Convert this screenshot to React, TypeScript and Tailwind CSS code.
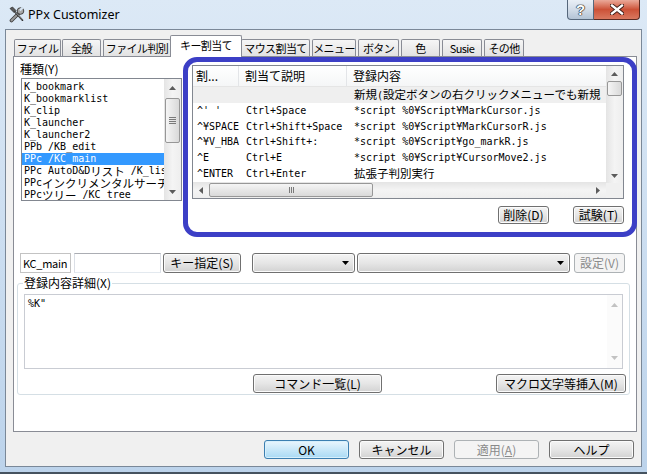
import React from 'react';

const mono = "font-['DejaVu_Sans_Mono','Noto_Sans_CJK_JP',monospace] text-[10px]";

// half-width text in the mono face, wide (CJK) runs a little larger like MS Gothic
function Mono({ text }: { text: string }) {
  const parts = text.split(/([^\x00-\x7f\u00a5]+)/);
  return (
    <>
      {parts.map((p, i) =>
        /[^\x00-\x7f\u00a5]/.test(p) ? (
          <span key={i} className="font-['Noto_Sans_CJK_JP',sans-serif] text-[11.5px]">
            {p}
          </span>
        ) : (
          <React.Fragment key={i}>{p}</React.Fragment>
        )
      )}
    </>
  );
}

function Arrow({ dir, light }: { dir: 'up' | 'down' | 'left' | 'right'; light?: boolean }) {
  const fill = light ? '#c2c2c2' : '#5c5c5c';
  if (dir === 'up' || dir === 'down') {
    return (
      <svg width="7" height="4" viewBox="0 0 7 4">
        <polygon points={dir === 'up' ? '0,4 3.5,0 7,4' : '0,0 7,0 3.5,4'} fill={fill} />
      </svg>
    );
  }
  return (
    <svg width="4" height="7" viewBox="0 0 4 7">
      <polygon points={dir === 'left' ? '4,0 4,7 0,3.5' : '0,0 0,7 4,3.5'} fill={fill} />
    </svg>
  );
}

function Btn({
  className,
  children,
  disabled,
  primary,
}: {
  className: string;
  children: React.ReactNode;
  disabled?: boolean;
  primary?: boolean;
}) {
  const look = disabled
    ? 'border-[#adb2b5] bg-[#f4f4f4] text-[#8a8a8a]'
    : primary
    ? 'border-[#3c7fb1] bg-linear-to-b from-[#eaf6fd] via-[#c9e8f9] to-[#a9daf5] shadow-[inset_0_0_0_1px_#d8f0fc]'
    : 'border-[#707070] bg-linear-to-b from-[#f4f4f4] via-[#e6e6e6] to-[#d2d2d2] shadow-[inset_0_0_0_1px_#fbfbfb]';
  return (
    <div
      className={`flex shrink-0 items-center justify-center whitespace-nowrap rounded-[3px] border text-[12px] leading-none ${look} ${className}`}
    >
      {children}
    </div>
  );
}

function Combo({ className }: { className: string }) {
  return (
    <div
      className={`flex h-[20px] shrink-0 items-center justify-end rounded-[3px] border border-[#707070] bg-linear-to-b from-[#f4f4f4] via-[#e6e6e6] to-[#d2d2d2] pr-[5px] shadow-[inset_0_0_0_1px_#fbfbfb] ${className}`}
    >
      <svg width="7" height="4" viewBox="0 0 7 4">
        <polygon points="0,0 7,0 3.5,4" fill="#000" />
      </svg>
    </div>
  );
}

function AppIcon() {
  return (
    <svg width="17" height="17" viewBox="0 0 17 17">
      <path d="M3.5 14.5 L11 7" stroke="#3a3a3a" strokeWidth="3.6" strokeLinecap="round" />
      <path d="M3.5 14.5 L11 7" stroke="#9a9a9a" strokeWidth="2" strokeLinecap="round" />
      <circle cx="12.5" cy="5" r="3.3" fill="#a8a8a8" stroke="#3a3a3a" strokeWidth="0.9" />
      <rect x="12.2" y="1" width="2.2" height="4" fill="#d6e4f2" transform="rotate(45 13.3 3)" />
      <path d="M2 2.5 L4.5 1 L8 4.5 L6 6.5 Z" fill="#5a5a5a" stroke="#2a2a2a" strokeWidth="0.7" />
      <path d="M6.8 5.6 L14.5 14.2" stroke="#2e2e2e" strokeWidth="1.7" strokeLinecap="round" />
      <path d="M7 5.6 L14.3 13.8" stroke="#b8b8b8" strokeWidth="0.6" />
    </svg>
  );
}

const listItems = [
  'K_bookmark',
  'K_bookmarklist',
  'K_clip',
  'K_launcher',
  'K_launcher2',
  'PPb /KB_edit',
  'PPc /KC_main',
  'PPc AutoD&Dリスト /K_list',
  'PPcインクリメンタルサーチ /K_isearch',
  'PPcツリー /KC_tree',
];

const rows: [string, string, string][] = [
  ['', '', '新規(設定ボタンの右クリックメニューでも新規'],
  ["^' '", 'Ctrl+Space', '*script %0¥Script¥MarkCursor.js'],
  ['^¥SPACE', 'Ctrl+Shift+Space', '*script %0¥Script¥MarkCursorR.js'],
  ['^¥V_HBA', 'Ctrl+Shift+:', '*script %0¥Script¥go_markR.js'],
  ['^E', 'Ctrl+E', '*script %0¥Script¥CursorMove2.js'],
  ['^ENTER', 'Ctrl+Enter', '拡張子判別実行'],
];

const tabs = [
  { label: 'ファイル', cls: 'w-[47px]' },
  { label: '全般', cls: 'ml-[1px] w-[39px]' },
  { label: 'ファイル判別', cls: 'ml-[2px] w-[68px]' },
  { label: 'キー割当て', cls: 'ml-[-1px] w-[72px]', active: true },
  { label: 'マウス割当て', cls: 'ml-[-1px] w-[69px]' },
  { label: 'メニュー', cls: 'ml-[2px] w-[44px]' },
  { label: 'ボタン', cls: 'ml-[2px] w-[41px]' },
  { label: '色', cls: 'ml-[2px] w-[39px]' },
  { label: 'Susie', cls: 'ml-[2px] w-[40px]' },
  { label: 'その他', cls: 'ml-[2px] w-[40px]' },
];

export default function App() {
  return (
    <div className="relative h-[474px] w-[647px] overflow-hidden border-b-2 border-[#45525f] bg-linear-to-b from-[#dce9f6] to-[#bcd3eb] font-['Noto_Sans_CJK_JP',sans-serif] text-[12px] text-black">
      {/* Title bar */}
      <div className="flex h-[29px] items-start">
        <div className="ml-[8px] mt-[6px]">
          <AppIcon />
        </div>
        <div className="ml-[3px] mt-[6px] font-['Noto_Sans',sans-serif] text-[12.5px] leading-[17px]">PPx Customizer</div>
        <div className="ml-auto mr-[7px] flex">
          <div className="flex h-[20px] w-[27px] items-center justify-center rounded-bl-[4px] border border-t-0 border-[#56677b] bg-linear-to-b from-[#e9eff6] via-[#d2dce8] to-[#b3c3d5] pb-[1px] font-['Liberation_Sans',sans-serif] text-[15px] font-bold leading-none text-white [text-shadow:0_0_1px_#222,0_0_1px_#222,0_0_1px_#222,0_0_1px_#222]">
            ?
          </div>
          <div className="flex h-[20px] w-[46px] items-center justify-center rounded-br-[4px] border border-l-0 border-t-0 border-[#5a2a22] bg-linear-to-b from-[#eaa999] via-[#cc5137] to-[#d9785f]">
            <svg width="14" height="11" viewBox="0 0 14 11">
              <path d="M2 1.5 L12 9.5 M12 1.5 L2 9.5" stroke="#3b1a14" strokeWidth="4.2" strokeLinecap="square" />
              <path d="M2 1.5 L12 9.5 M12 1.5 L2 9.5" stroke="#ffffff" strokeWidth="2.3" strokeLinecap="square" />
            </svg>
          </div>
        </div>
      </div>

      {/* Client area */}
      <div className="mx-[5px] flex h-[438px] flex-col border border-[#7a8898] bg-[#f0f0f0] pl-[7px] pr-[3px] pt-[5px]">
        {/* Tabs */}
        <div className="relative z-10 flex h-[21px] items-end pl-[1px]">
          {tabs.map((t) =>
            t.active ? (
              <div
                key={t.label}
                className={`relative z-10 -mb-px flex h-[22px] items-start justify-center whitespace-nowrap rounded-t-[2px] border border-b-0 border-[#898c95] bg-white pt-[2px] text-[11px] leading-[14px] tracking-[-0.6px] ${t.cls}`}
              >
                {t.label}
              </div>
            ) : (
              <div
                key={t.label}
                className={`flex h-[17px] items-center justify-center whitespace-nowrap rounded-t-[2px] border border-b-0 border-[#898c95] bg-linear-to-b from-[#f6f6f6] to-[#e2e2e2] text-[11px] leading-none tracking-[-0.6px] ${t.cls}`}
              >
                {t.label}
              </div>
            )
          )}
        </div>

        {/* Tab panel */}
        <div className="flex h-[376px] w-[624px] flex-col border border-[#898c95] bg-white">
          <div className="flex items-start pl-[6px] pt-[5px]">
            {/* 種類 list */}
            <div className="flex w-[162px] flex-col">
              <div className="h-[14px] leading-[14px]">種類(Y)</div>
              <div className="ml-[1px] mt-[2px] flex h-[123px] w-[161px] border border-[#828790] bg-white">
                <div className={`flex-1 overflow-hidden pt-[2px] ${mono}`}>
                  {listItems.map((it) => (
                    <div
                      key={it}
                      className={`flex h-[12px] items-center overflow-hidden whitespace-pre pl-[2px] leading-[12px] ${
                        it === 'PPc /KC_main' ? 'bg-[#3399ff] text-white' : ''
                      }`}
                    >
                      <Mono text={it} />
                    </div>
                  ))}
                </div>
                <div className="flex w-[17px] flex-col bg-linear-to-r from-[#e4e4e4] via-[#f4f4f4] to-[#eeeeee]">
                  <div className="flex h-[17px] items-center justify-center">
                    <Arrow dir="up" />
                  </div>
                  <div className="flex-1">
                    <div className="mx-[1px] mt-[2px] flex h-[45px] flex-col items-center justify-center gap-[1px] rounded-[2px] border border-[#979797] bg-linear-to-r from-[#f5f5f5] to-[#d9d9d9]">
                      <div className="h-px w-[7px] bg-[#7a7a7a]" />
                      <div className="h-px w-[7px] bg-[#7a7a7a]" />
                      <div className="h-px w-[7px] bg-[#7a7a7a]" />
                      <div className="h-px w-[7px] bg-[#7a7a7a]" />
                    </div>
                  </div>
                  <div className="flex h-[17px] items-center justify-center">
                    <Arrow dir="down" />
                  </div>
                </div>
              </div>
            </div>

            {/* Key list view */}
            <div className="ml-[10px] mt-[3px] flex w-[432px] flex-col">
              <div className="flex h-[134px] border border-[#828790] bg-white">
                <div className="flex w-[413px] flex-col">
                  <div className="flex h-[21px] items-center border-b border-[#e5e5e5] bg-linear-to-b from-[#ffffff] to-[#f5f6f7]">
                    <div className="flex h-full w-[46px] items-center border-r border-[#e3e5e8] pl-[3px]">割...</div>
                    <div className="flex h-full w-[108px] items-center border-r border-[#e3e5e8] pl-[6px]">割当て説明</div>
                    <div className="flex h-full flex-1 items-center pl-[6px]">登録内容</div>
                  </div>
                  {rows.map((r, i) => (
                    <div
                      key={i}
                      className={`flex h-[16px] items-center overflow-hidden whitespace-pre leading-[16px] ${mono} ${
                        i === 0 ? 'bg-[#efefef]' : ''
                      }`}
                    >
                      <div className="w-[46px] shrink-0 pl-[4px]">{r[0]}</div>
                      <div className="w-[108px] shrink-0 pl-[7px]">{r[1]}</div>
                      <div className="flex-1 overflow-hidden pl-[7px]">
                        <Mono text={r[2]} />
                      </div>
                    </div>
                  ))}
                  <div className="flex h-[16px] items-center bg-linear-to-b from-[#e4e4e4] via-[#f4f4f4] to-[#eeeeee]">
                    <div className="flex h-full w-[16px] items-center justify-center">
                      <Arrow dir="left" />
                    </div>
                    <div className="flex h-[14px] w-[164px] items-center justify-center gap-[1px] rounded-[2px] border border-[#979797] bg-linear-to-b from-[#f5f5f5] to-[#d9d9d9]">
                      <div className="h-[6px] w-px bg-[#7a7a7a]" />
                      <div className="h-[6px] w-px bg-[#7a7a7a]" />
                      <div className="h-[6px] w-px bg-[#7a7a7a]" />
                    </div>
                    <div className="ml-auto flex h-full w-[16px] items-center justify-center">
                      <Arrow dir="right" />
                    </div>
                  </div>
                </div>
                <div className="flex w-[17px] flex-col">
                  <div className="flex h-[117px] flex-col bg-linear-to-r from-[#e4e4e4] via-[#f4f4f4] to-[#eeeeee]">
                    <div className="flex h-[15px] items-center justify-center">
                      <Arrow dir="up" />
                    </div>
                    <div className="flex-1">
                      <div className="mx-[1px] h-[15px] rounded-[2px] border border-[#979797] bg-linear-to-r from-[#f5f5f5] to-[#d9d9d9]" />
                    </div>
                    <div className="flex h-[15px] items-center justify-center">
                      <Arrow dir="down" />
                    </div>
                  </div>
                  <div className="flex-1 bg-[#f0f0f0]" />
                </div>
              </div>
              <div className="mt-[7px] flex justify-end gap-[24px]">
                <Btn className="h-[18px] w-[51px]">削除(D)</Btn>
                <Btn className="h-[18px] w-[51px]">試験(T)</Btn>
              </div>
            </div>
          </div>

          {/* Key entry row */}
          <div className="ml-[6px] mt-[29px] flex h-[20px] items-center">
            <div className="flex h-[20px] w-[51px] items-center border border-[#c3c3c3] bg-white pl-[2px] text-[11px] tracking-[-0.3px]">
              KC_main
            </div>
            <div className="ml-[3px] h-[20px] w-[87px] border border-[#abadb3] border-x-[#dbdfe6] border-b-[#e3e9ef] bg-white" />
            <Btn className="ml-[2px] h-[20px] w-[78px]">キー指定(S)</Btn>
            <Combo className="ml-[11px] w-[103px]" />
            <Combo className="ml-[2px] w-[213px]" />
            <Btn className="ml-[4px] h-[20px] w-[51px]" disabled>
              設定(V)
            </Btn>
          </div>

          {/* 登録内容詳細 group */}
          <fieldset className="ml-[3px] mt-[4px] w-[613px] rounded-[3px] border border-[#d5dfe5] px-[6px] pb-[1px]">
            <legend className="ml-[-1px] px-[1px] leading-[12px]">登録内容詳細(X)</legend>
            <div className="mt-[5px] flex h-[75px] border border-[#c9ccd3] bg-white">
              <div className={`flex-1 pl-[3px] pt-[3px] leading-[12px] ${mono}`}>%K"</div>
              <div className="flex w-[15px] flex-col bg-[#fbfbfb]">
                <div className="flex h-[20px] items-center justify-center">
                  <Arrow dir="up" light />
                </div>
                <div className="flex-1" />
                <div className="flex h-[20px] items-center justify-center">
                  <Arrow dir="down" light />
                </div>
              </div>
            </div>
            <div className="mt-[5px] flex h-[19px]">
              <Btn className="ml-[229px] h-[19px] w-[129px]">コマンド一覧(L)</Btn>
              <Btn className="-mr-[3px] ml-auto h-[19px] w-[130px]">マクロ文字等挿入(M)</Btn>
            </div>
          </fieldset>
        </div>

        {/* Dialog buttons */}
        <div className="mt-[8px] flex justify-end gap-[10px] pr-[4px]">
          <Btn className="h-[19px] w-[85px]" primary>
            OK
          </Btn>
          <Btn className="h-[19px] w-[85px]">キャンセル</Btn>
          <Btn className="h-[19px] w-[85px]" disabled>
            <span>
              適用(<span className="underline">A</span>)
            </span>
          </Btn>
          <Btn className="h-[19px] w-[85px]">ヘルプ</Btn>
        </div>
      </div>

      {/* annotation drawn over the key list */}
      <div className="pointer-events-none absolute left-[183px] top-[57px] h-[180px] w-[454px] rounded-[14px] border-[5px] border-[#3c3fc6]" />
    </div>
  );
}
